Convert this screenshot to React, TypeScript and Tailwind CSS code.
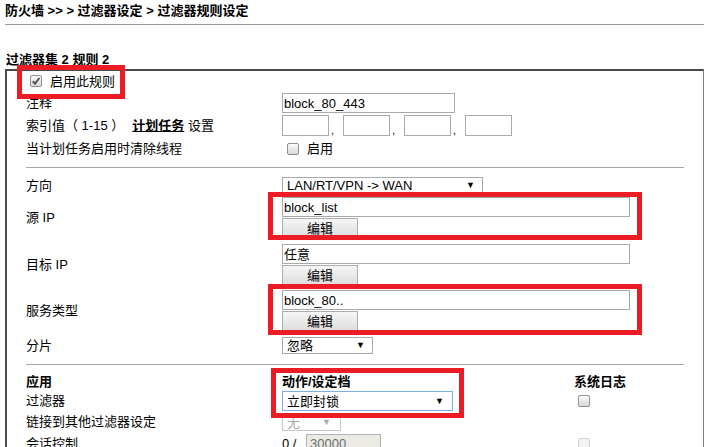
import React from 'react';

function CheckBox({ checked = false, disabled = false }: { checked?: boolean; disabled?: boolean }) {
  return (
    <span
      className={`inline-flex w-[12px] h-[12px] shrink-0 items-center justify-center rounded-[2px] border ${
        disabled
          ? 'border-[#cfcfcf] bg-[#f3f3f3]'
          : 'border-[#8e8e8e] bg-linear-to-b from-[#fbfbfb] to-[#d9d9d9]'
      }`}
    >
      {checked && (
        <svg width="10" height="10" viewBox="0 0 10 10">
          <path d="M1.8 5.2 L4 7.6 L8.4 2" fill="none" stroke="#555" strokeWidth="2" />
        </svg>
      )}
    </span>
  );
}

function TextBox({ value = '', width, className = '' }: { value?: string; width: string; className?: string }) {
  return (
    <div
      className={`${width} h-[20px] border border-[#a9a9a9] bg-white px-[1px] flex items-center text-[13px] text-black leading-none ${className}`}
    >
      {value}
    </div>
  );
}

function EditButton() {
  return (
    <div className="mt-[1px] w-[76px] h-[21px] border border-[#adadad] bg-linear-to-b from-[#f6f6f6] to-[#dcdcdc] flex items-center justify-center text-[13px] text-black">
      编辑
    </div>
  );
}

function Select({
  value,
  width,
  height = 'h-[17px]',
  focused = false,
  disabled = false,
  arrowPad = 'pr-[7px]',
}: {
  value: string;
  width: string;
  height?: string;
  focused?: boolean;
  disabled?: boolean;
  arrowPad?: string;
}) {
  return (
    <div
      className={`${width} ${height} flex items-center justify-between pl-[4px] ${arrowPad} border ${
        focused ? 'border-[#7eaee3]' : disabled ? 'border-[#c6c6c6]' : 'border-[#a9a9a9]'
      } bg-white text-[13px] leading-none ${disabled ? 'text-[#a8a8a8]' : 'text-black'}`}
    >
      <span>{value}</span>
      <span className={`text-[9px] ${disabled ? 'text-[#aaa]' : 'text-black'}`}>▼</span>
    </div>
  );
}

function Row({ label, children, className = '' }: { label: React.ReactNode; children?: React.ReactNode; className?: string }) {
  return (
    <div className={`flex items-center ${className}`}>
      <div className="w-[256px] shrink-0">{label}</div>
      <div className="flex items-center">{children}</div>
    </div>
  );
}

export default function App() {
  return (
    <div className="relative w-[704px] h-[447px] overflow-hidden bg-white text-[13px] text-black font-['Liberation_Sans','Noto_Sans_CJK_SC',sans-serif]">
      {/* breadcrumb */}
      <div className="ml-[5px] h-[25px] pt-[1px] border-b border-[#9a9a9a] font-bold text-[13px]">
        防火墙 &gt;&gt; &gt; 过滤器设定 &gt; 过滤器规则设定
      </div>

      <div className="ml-[6px] mt-[25px] h-[19px] font-bold">过滤器集 2 规则 2</div>

      <div className="ml-[5px] w-[699px] border-t-2 border-l-2 border-[#4a4a4a] border-r border-r-[#808080] pl-[19px] pr-[19px] h-[400px]">
        <div className="flex items-center h-[21px]">
          <span className="ml-[4px]">
            <CheckBox checked />
          </span>
          <span className="ml-[8px]">启用此规则</span>
        </div>

        <Row label="注释" className="h-[22px]">
          <TextBox value="block_80_443" width="w-[173px]" />
        </Row>

        <Row
          className="h-[23px]"
          label={
            <span>
              索引值（ 1-15 ）<span className="ml-[8px] font-bold underline">计划任务</span> 设置
            </span>
          }
        >
          {[0, 1, 2, 3].map((i) => (
            <div key={i} className="flex items-end">
              <TextBox width="w-[47px]" className="h-[21px]" />
              {i < 3 && <span className="w-[14px] pl-[2px] text-[11px] leading-[12px]">,</span>}
            </div>
          ))}
        </Row>

        <Row label="当计划任务启用时清除线程" className="h-[24px]">
          <span className="ml-[5px] flex">
            <CheckBox />
          </span>
          <span className="ml-[8px]">启用</span>
        </Row>

        <div className="mt-[6px] mb-[9px] border-t border-[#a6a6a6]" />

        <Row label="方向" className="h-[17px]">
          <Select value="LAN/RT/VPN -> WAN" width="w-[201px]" />
        </Row>

        <Row label="源 IP" className="mt-[3px]">
          <div className="flex flex-col">
            <TextBox value="block_list" width="w-[348px]" />
            <EditButton />
          </div>
        </Row>

        <Row label="目标 IP" className="mt-[5px]">
          <div className="flex flex-col">
            <TextBox value="任意" width="w-[348px]" />
            <EditButton />
          </div>
        </Row>

        <Row label="服务类型" className="mt-[4px]">
          <div className="flex flex-col">
            <TextBox value="block_80.." width="w-[348px]" />
            <EditButton />
          </div>
        </Row>

        <Row label="分片" className="mt-[5px] h-[17px]">
          <Select value="忽略" width="w-[91px]" />
        </Row>

        <div className="mt-[10px] border-t border-[#a6a6a6]" />

        <div className="mt-[8px] h-[18px] flex items-center font-bold">
          <div className="w-[256px]">应用</div>
          <div className="w-[292px]">动作/设定档</div>
          <div>系统日志</div>
        </div>

        <div className="h-[20px] flex items-center">
          <div className="w-[256px]">过滤器</div>
          <div className="w-[296px]">
            <Select value="立即封锁" width="w-[171px]" height="h-[20px]" focused arrowPad="pr-[8px]" />
          </div>
          <CheckBox />
        </div>

        <div className="mt-[2px] h-[18px] flex items-center">
          <div className="w-[256px]">链接到其他过滤器设定</div>
          <Select value="无" width="w-[59px]" height="h-[18px]" disabled arrowPad="pr-[9px]" />
        </div>

        <div className="mt-[3px] h-[20px] flex items-center">
          <div className="w-[256px]">会话控制</div>
          <div className="w-[296px] flex items-center">
            <span className="w-[24px]">0 /</span>
            <div className="w-[75px] h-[20px] border border-[#b5b5b5] bg-[#ebebe4] px-[3px] flex items-center text-[#6d6d6d]">
              30000
            </div>
          </div>
          <CheckBox disabled />
        </div>
      </div>

      {/* red annotation boxes */}
      <div className="absolute left-[17px] top-[65px] w-[108px] h-[34px] border-[5px] border-[#ec1c24]" />
      <div className="absolute left-[268px] top-[192px] w-[374px] h-[48px] border-[5px] border-[#ec1c24]" />
      <div className="absolute left-[268px] top-[284px] w-[374px] h-[51px] border-[5px] border-[#ec1c24]" />
      <div className="absolute left-[271px] top-[368px] w-[193px] h-[50px] border-[5px] border-[#ec1c24]" />
    </div>
  );
}
